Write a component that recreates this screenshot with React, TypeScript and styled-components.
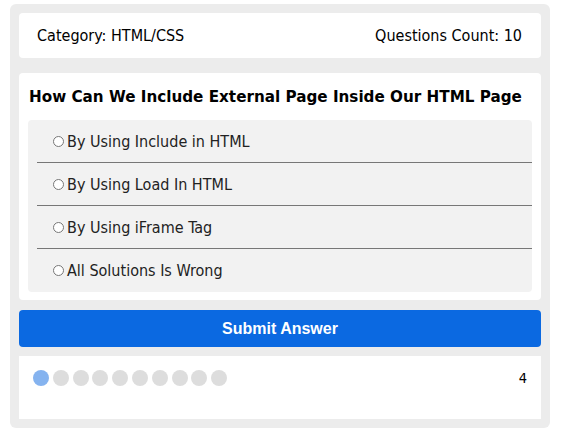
import styled, { createGlobalStyle } from "styled-components";

const answers = [
  "By Using Include in HTML",
  "By Using Load In HTML",
  "By Using iFrame Tag",
  "All Solutions Is Wrong",
];

const BODY_FONT = `Tahoma, "DejaVu Sans Condensed", "Liberation Sans", sans-serif`;

export default function App() {
  return (
    <>
      <GlobalStyle />
      <StyledQuiz>
        <StyledInfo>
          <span>Category: HTML/CSS</span>
          <span>Questions Count: 10</span>
        </StyledInfo>
        <StyledQuestion>
          <StyledTitle>How Can We Include External Page Inside Our HTML Page</StyledTitle>
          <StyledAnswers>
            {answers.map((answer, i) => (
              <StyledAnswer key={answer} $last={i === answers.length - 1}>
                <input type="radio" name="question" id={`answer_${i + 1}`} />
                <label htmlFor={`answer_${i + 1}`}>{answer}</label>
              </StyledAnswer>
            ))}
          </StyledAnswers>
        </StyledQuestion>
        <StyledSubmit>Submit Answer</StyledSubmit>
        <StyledBullets>
          <StyledSpans>
            {Array.from({ length: 10 }).map((_, i) => (
              <StyledDot key={i} $on={i === 0} />
            ))}
          </StyledSpans>
          <StyledCountdown>4</StyledCountdown>
        </StyledBullets>
      </StyledQuiz>
    </>
  );
}

const GlobalStyle = createGlobalStyle`
  body {
    margin: 0;
    background: #fff;
    font-family: ${BODY_FONT};
  }
`;

const StyledQuiz = styled.div`
  box-sizing: border-box;
  width: 540px;
  height: 424px;
  margin: 4px 10px;
  padding: 9px;
  background: #ececec;
  border-radius: 6px;
`;

const StyledInfo = styled.div`
  display: flex;
  justify-content: space-between;
  align-items: center;
  height: 45px;
  padding: 0 19px 0 18px;
  background: #fff;
  border-radius: 4px;
  font-size: 16px;
  color: #000;
`;

const StyledQuestion = styled.div`
  margin-top: 15px;
  padding: 13px 9px 8px;
  background: #fff;
  border-radius: 4px;
`;

const StyledTitle = styled.h2`
  margin: 0 0 12px 1px;
  font-family: Tahoma, "DejaVu Sans", sans-serif;
  font-size: 15.2px;
  line-height: 22px;
  font-weight: bold;
  color: #000;
  white-space: nowrap;
`;

const StyledAnswers = styled.div`
  padding: 0 0 1px 9px;
  background: #f2f2f2;
  border-radius: 4px;
`;

const StyledAnswer = styled.div<{ $last: boolean }>`
  display: flex;
  align-items: center;
  height: 42px;
  padding-left: 11px;
  border-bottom: ${(p) => (p.$last ? "none" : "1px solid #777")};
  font-size: 16px;
  color: #222;

  input {
    margin: 1px 3px 0 5px;
    width: 11px;
    height: 11px;
  }
`;

const StyledSubmit = styled.button`
  display: block;
  width: 100%;
  height: 37px;
  margin-top: 10px;
  border: none;
  border-radius: 4px;
  background: #0b69e1;
  color: #fff;
  font-family: "Liberation Sans", Arial, sans-serif;
  font-size: 16px;
  font-weight: bold;
`;

const StyledBullets = styled.div`
  display: flex;
  justify-content: space-between;
  align-items: flex-start;
  height: 63px;
  margin-top: 9px;
  padding: 14px 14px 0;
  box-sizing: border-box;
  background: #fff;
`;

const StyledSpans = styled.div`
  display: flex;
  gap: 3.8px;
`;

const StyledDot = styled.span<{ $on: boolean }>`
  width: 16px;
  height: 16px;
  border-radius: 50%;
  background: ${(p) => (p.$on ? "#85b3ef" : "#ddd")};
`;

const StyledCountdown = styled.div`
  font-size: 14.5px;
  line-height: 16px;
  color: #000;
`;
